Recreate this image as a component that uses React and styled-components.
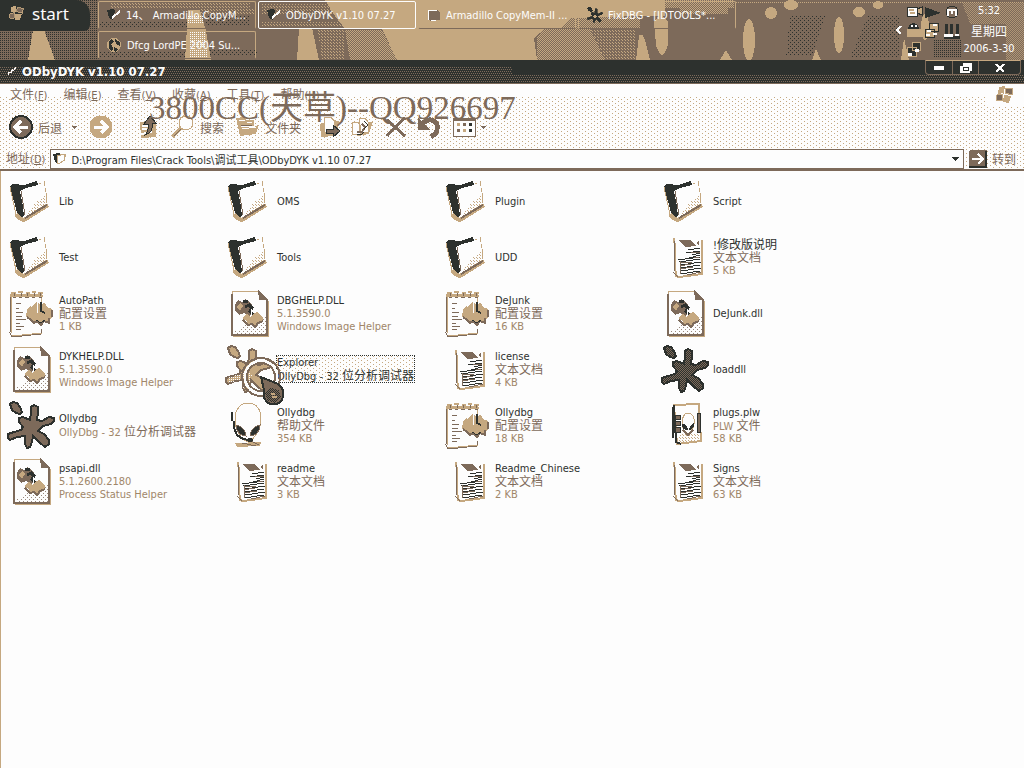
import React from 'react';
import styled, { createGlobalStyle, css } from 'styled-components';

const C = { dark: '#2d312e', brown: '#7d6a5a', mid: '#a08669', tan: '#c5a880', white: '#fdfdfd' };
const UI = "'DejaVu Sans Condensed', 'Noto Sans', 'Noto Sans CJK SC', sans-serif";

const dots = (color, w, h) => css`
  background-image: conic-gradient(at 1px 1px, transparent 75%, ${color} 0),
    conic-gradient(at 1px 1px, transparent 75%, ${color} 0);
  background-size: ${w}px ${h}px;
  background-position: 0 0, ${Math.floor(w / 2)}px ${Math.floor(h / 2)}px;
`;

const Global = createGlobalStyle`
  * { box-sizing: border-box; }
  body { margin: 0; background: ${C.white}; font-family: ${UI}; font-size: 11px; line-height: 13px; color: ${C.dark}; }
  button, input { font: inherit; color: inherit; }
  button { border: 0; padding: 0; background: none; cursor: pointer; }
  svg { display: block; flex: none; }
`;

const Page = styled.div`
  min-height: 100vh;
  display: flex;
  flex-direction: column;
`;

/* Task bar */
const Taskbar = styled.header`
  position: relative;
  height: 60px;
  display: flex;
  background: ${C.brown};
  overflow: hidden;
  color: ${C.white};
`;
const Wallpaper = styled.svg`
  position: absolute;
  inset: 0;
  width: 100%;
  height: 100%;
`;
const StartButton = styled.button`
  position: relative;
  width: 90px;
  height: 31px;
  margin-right: 8px;
  padding: 0 0 4px 8px;
  display: flex;
  align-items: center;
  gap: 7px;
  background: ${C.dark};
  border-radius: 0 14px 6px 0;
  font-family: 'Noto Sans', sans-serif;
  font-size: 17px;
  line-height: 24px;
`;
const Tasks = styled.nav`
  position: relative;
  flex: 1;
  display: grid;
  grid-template-columns: repeat(4, 158px);
  grid-auto-rows: 28px;
  gap: 2px;
  padding-top: 1px;
`;
const TaskButton = styled.button`
  display: flex;
  align-items: center;
  gap: 5px;
  min-width: 0;
  padding: 0 8px;
  border: 1px solid ${(p) => (p.$active ? C.white : C.tan)};
  border-bottom-color: ${(p) => (p.$active ? C.white : C.brown)};
  border-radius: 2px;
  color: ${C.white};
  text-align: left;
  white-space: pre;
`;
const Tray = styled.div`
  position: relative;
  display: flex;
  align-items: center;
`;
const TrayMore = styled.button`
  width: 14px;
  height: 20px;
  display: grid;
  place-items: center;
`;
const Clock = styled.time`
  width: 64px;
  height: 60px;
  padding: 2px 6px 2px 0;
  display: flex;
  flex-direction: column;
  justify-content: space-between;
  text-align: center;
  line-height: 18px;
`;

/* Window frame */
const TitleBar = styled.div`
  height: 24px;
  display: flex;
  align-items: center;
  gap: 4px;
  padding: 0 3px 0 5px;
  background: ${C.dark};
  border-bottom: 1px solid ${C.brown};
  position: relative;
`;
const TitleHaze = styled.div`
  position: absolute;
  left: 0;
  right: ${(p) => p.$right};
  bottom: 0;
  height: ${(p) => p.$height}px;
  ${dots(C.brown, 2, 4)}
`;
const Title = styled.h1`
  position: relative;
  flex: 1;
  margin: 0;
  color: ${C.white};
  font-family: 'DejaVu Sans Condensed', sans-serif;
  font-size: 13px;
  line-height: 16px;
`;
const Controls = styled.div`
  position: relative;
  align-self: flex-start;
  height: 15px;
  display: flex;
  border: 1px solid ${C.brown};
  border-top-color: ${C.tan};
  border-radius: 0 0 4px 4px;
`;
const ControlButton = styled.button`
  width: ${(p) => p.$width}px;
  display: grid;
  place-items: center;
  border-right: 1px solid ${C.brown};
  &:last-child { border-right: 0; }
`;

/* Menu, tool bar, address bar */
const Bars = styled.div`
  position: relative;
  border-bottom: 2px solid ${C.brown};
`;
const BarsTexture = styled.div`
  position: absolute;
  inset: 13px 0 0;
  ${dots(C.tan, 6, 4)}
`;
const MenuBar = styled.nav`
  position: relative;
  height: 22px;
  display: flex;
  gap: 16px;
  padding-left: 10px;
  align-items: center;
  color: ${C.brown};
`;
const MenuItem = styled.button`
  color: ${C.brown};
  white-space: nowrap;
`;
const Brand = styled.div`
  width: 38px;
  height: 22px;
  margin-left: auto;
  display: grid;
  place-items: center;
  background: ${C.white};
`;
const ToolBar = styled.div`
  position: relative;
  height: 42px;
  display: flex;
  align-items: center;
  gap: 10px;
  padding-left: 9px;
`;
const Tool = styled.button`
  display: flex;
  align-items: center;
  gap: 5px;
  margin-left: ${(p) => p.$space || 0}px;
  color: ${C.brown};
`;
const AddressBar = styled.form`
  position: relative;
  height: 21px;
  display: flex;
  align-items: center;
  gap: 5px;
  padding: 0 8px 0 6px;
  color: ${C.brown};
`;
const AddressBox = styled.div`
  flex: 1;
  height: 20px;
  display: flex;
  align-items: center;
  gap: 4px;
  padding: 0 4px 0 2px;
  background: ${C.white};
  border: 1px solid ${C.brown};
`;
const AddressInput = styled.input`
  flex: 1;
  min-width: 0;
  height: 16px;
  padding: 0;
  border: 0;
  outline: 0;
  background: none;
  color: ${C.dark};
`;
const GoButton = styled.button`
  display: flex;
  align-items: center;
  gap: 5px;
  color: ${C.brown};
`;
const Watermark = styled.div`
  position: absolute;
  left: 149px;
  top: 4px;
  font-family: 'Liberation Serif', 'Noto Sans CJK SC', serif;
  font-size: 33px;
  line-height: 40px;
  white-space: nowrap;
  color: ${C.brown};
  pointer-events: none;
`;

/* Folder contents */
const Content = styled.main`
  flex: 1;
  border-left: 1px solid ${C.tan};
  padding: 2px 0 0 6px;
`;
const Files = styled.ul`
  list-style: none;
  margin: 0;
  padding: 0;
  display: grid;
  grid-template-columns: repeat(auto-fill, 218px);
  grid-auto-rows: 56px;
`;
const Tile = styled.li`
  position: relative;
  display: flex;
`;
const TileButton = styled.button`
  display: flex;
  align-items: center;
  gap: 4px;
  text-align: left;
  white-space: nowrap;
`;
const Label = styled.span`
  display: flex;
  flex-direction: column;
  ${(p) => p.$selected && css`
    outline: 1px dotted ${C.dark};
    ${dots(C.tan, 6, 4)}
  `}
`;
const Name = styled.span`
  height: 13px;
  color: ${C.dark};
`;
const Meta = styled.span`
  height: 13px;
  color: ${(p) => (p.$selected ? C.dark : C.mid)};
`;
const Han = styled.span`
  font-family: 'Noto Sans CJK SC', sans-serif;
  font-size: 12px;
  line-height: 11px;
  color: ${(p) => (p.$inherit ? 'inherit' : C.brown)};
`;
const Cursor = styled.svg`
  position: absolute;
  left: 16px;
  top: 15px;
  z-index: 1;
  pointer-events: none;
`;

const Mixed = ({ children, inherit }) =>
  children.split(/([\u4e00-\u9fff]+)/).map((part, i) =>
    i % 2 ? <Han key={i} $inherit={inherit}>{part}</Han> : part
  );

/* Icons */
const Defs = () => (
  <svg width="0" height="0" style={{ position: 'absolute' }} aria-hidden="true">
    <defs>
      {[['ditherTan', C.tan, 3], ['ditherDark', C.dark, 4], ['ditherBrown', C.brown, 4], ['denseDark', C.dark, 2], ['denseBrown', C.brown, 2], ['denseTan', C.tan, 2], ['denseWhite', C.white, 2]].map(([id, fill, s]) => (
        <pattern key={id} id={id} width={s} height={s} patternUnits="userSpaceOnUse">
          <rect width="1" height="1" fill={fill} />
          {s > 2 && <rect x={s - 2} y={s - 2} width="1" height="1" fill={fill} />}
        </pattern>
      ))}
      <pattern id="checkBrown" width="2" height="2" patternUnits="userSpaceOnUse">
        <rect width="2" height="2" fill={C.dark} />
        <path d="M0 0H1V1H0ZM1 1H2V2H1Z" fill={C.brown} />
      </pattern>
      <pattern id="checkTan" width="2" height="2" patternUnits="userSpaceOnUse">
        <path d="M0 0H1V1H0ZM1 1H2V2H1Z" fill={C.tan} />
      </pattern>
    </defs>
  </svg>
);

const Svg = ({ w = 48, h = w, size = w, children }) => (
  <svg width={size} height={(size * h) / w} viewBox={`0 0 ${w} ${h}`} shapeRendering="crispEdges" fill="none" aria-hidden="true">
    {children}
  </svg>
);

const FolderIcon = () => (
  <Svg>
    <path d="M13 13 38 5 40 27 18 41Z" fill={C.white} />
    <path d="M20 36 30 24 40 17V27L19 40Z" fill="url(#ditherTan)" />
    <path d="M32 6H34M37 4V9M38 11V15M39 16V26" stroke={C.tan} />
    <path d="M9 37 12 41 17 43 41 28" stroke={C.tan} strokeWidth="4" />
    <path d="M18 41 40 28" stroke={C.brown} strokeWidth="2" />
    <path d="M3 9 6 7 17 8 30 4 31 8 19 11 13 14 16 30 17 39 14 40 10 36Z" fill={C.dark} />
    <path d="M14 14 18 38" stroke={C.brown} />
    <path d="M3 10 9 37" stroke={C.tan} />
  </Svg>
);
const TextIcon = () => (
  <Svg>
    <path d="M13 5 14 15V32L15 43 18 44 41 41V7" stroke={C.tan} strokeWidth="2" />
    <path d="M35 4 38 6V8" stroke={C.white} strokeWidth="3" />
    <path d="M13 8V17L14 38M12 39 17 44" stroke={C.brown} />
    <path d="M17 7H29L35 13 24 14Z" fill={C.brown} />
    <path d="M35 10 38 8V13" fill={C.brown} />
    <path d="M27 17 39 15M25 20 39 18M31 22 39 20M28 25 39 22M17 27 39 24M18 29 39 26M20 32 40 29M19 35 39 32M20 38 40 35M19 41 39 38" stroke={C.dark} />
    <path d="M30 19H39M33 24H38M19 30 31 29M19 33 30 31M19 36 32 34M26 42 40 39M19 28V41" stroke={C.brown} />
  </Svg>
);
const IniIcon = () => (
  <Svg>
    <path d="M4 6 3 44 5 48 34 45 35 40" stroke={C.brown} strokeWidth="1" />
    <path d="M4 7V44M3 6 34 5 35 15M5 47 35 44" stroke={C.tan} />
    <path d="M3 7H36M4 4H9M11 3H16M19 4H23M25 3H29M31 4H36" stroke={C.tan} strokeWidth="2" />
    <path d="M6 8H9M12 8H15M18 8H22M25 8H28M32 8H35M7 4V7M14 4V7M20 4V7M27 4V7M33 4V7" stroke={C.brown} />
    <path d="M9 14H14M9 19H12M9 23H16M9 27H15M9 30H19M9 34H13M9 37H17M9 40H14" stroke={C.brown} />
    <path d="M20 21 23 17 25 18 29 13 33 15 38 14 40 18 45 20 45 29 42 30 41 34 37 32 34 36 30 32 27 34 24 30 19 28Z" fill={C.tan} />
    <path d="M20 28 24 31 27 34 30 32 34 36 37 32 42 34V29M45 21V28" stroke={C.brown} strokeWidth="2" />
    <path d="M29 31 34 34 38 31" stroke={C.dark} strokeWidth="1" />
    <path d="M34 13V22L38 24" stroke={C.dark} strokeWidth="2" />
    <path d="M30 13V24" stroke={C.white} />
  </Svg>
);
const DllIcon = () => (
  <Svg>
    <path d="M7 2H33L42 11V46H7Z" fill={C.white} stroke={C.tan} />
    <path d="M10 42 24 34 41 26V45H9Z" fill="url(#ditherBrown)" opacity=".8" />
    <path d="M7 5V46H42V10" stroke={C.brown} strokeWidth="2" />
    <path d="M8 47H43V12" stroke={C.tan} />
    <path d="M33 1 43 11H34Z" fill={C.brown} />
    <path d="M10 16 13 11 17 13 20 10 24 12 27 16 26 20 28 25 23 28 19 24 14 26 10 22Z" fill={C.brown} />
    <path d="M11 18 15 14 18 17 15 22Z" fill={C.tan} />
    <path d="M20 18 24 16 27 19 25 22 29 27M18 12H23" stroke={C.dark} strokeWidth="3" />
    <path d="M18 28 22 24 25 28 29 24 33 23 35 26 38 29 37 33 33 34 30 38 27 35 23 36 22 32 18 30Z" fill={C.tan} />
    <path d="M18 31 23 36 27 35 30 38 33 34 38 32" stroke={C.brown} strokeWidth="2" />
    <path d="M26 20V27" stroke={C.white} />
  </Svg>
);

/* Ink splat: a loose drop and seven arms around a body */
const DROP = 'M3 3 6 1 10 2 13 6 15 11 13 13 9 12 5 9Z';
const BODY = 'M12 17 16 16 23 19 24 12 24 6 27 4 31 6 31 12 30 19 35 20 42 16 47 17 47 20 44 23 36 25 31 30 37 33 42 39 42 43 38 46 33 42 26 35 25 41 23 46 20 47 18 43 18 35 10 36 3 39 1 37 1 33 7 31 14 29 16 26 12 21Z';
const Splat = ({ fill, edge, light }) => (
  <Svg>
    <g fill={fill} stroke={edge} strokeWidth="2">
      <path d={DROP} />
      <path d={BODY} />
    </g>
    {light && <path d="M3 32 22 27 27 29 22 46 18 44 20 33 4 38Z" fill="url(#denseWhite)" />}
  </Svg>
);
const AlienIcon = () => (
  <Svg>
    <path d="M10 42 36 41 35 45 12 46Z" fill={C.tan} />
    <path d="M17 42 31 45M26 40 34 44" stroke={C.brown} />
    <path d="M23 2C32 2 36 9 36 18 36 28 30 38 23 41 15 38 10 28 10 18 10 9 15 2 23 2Z" fill={C.white} stroke={C.tan} strokeWidth="1" />
    <path d="M11 24C17 25 21 30 21 35 15 35 11 30 11 24ZM35 24C29 25 25 30 25 35 31 35 35 30 35 24Z" fill={C.dark} stroke={C.brown} />
    <path d="M7 11V20M9 20 9 27 12 34 18 38 24 39" stroke={C.dark} strokeWidth="2" />
    <ellipse cx="25" cy="39" rx="3" ry="2" fill={C.dark} />
  </Svg>
);
const PlwIcon = () => (
  <Svg>
    <path d="M13 4 38 3 40 40 16 43Z" fill={C.white} stroke={C.tan} strokeWidth="2" />
    <path d="M17 34 38 31 39 39 18 42Z" fill="url(#ditherTan)" />
    <path d="M13 4 15 41 20 43M12 6V37" stroke={C.dark} strokeWidth="2" />
    <path d="M14 14H19V18H14ZM14 20H19V24H14ZM14 26H19V31H14ZM36 12H39V31H36Z" fill={C.brown} stroke={C.dark} />
    <path d="M27 12C32 12 34 18 33 23 32 28 30 31 27 33 24 31 21 28 21 22 21 17 23 12 27 12Z" fill={C.white} stroke={C.tan} />
    <path d="M21 23C25 23 27 26 27 29 23 29 21 27 21 23ZM33 22C30 23 28 26 28 29 31 29 33 27 33 22Z" fill={C.dark} />
    <path d="M22 29 27 34 32 29" stroke={C.brown} strokeWidth="2" />
  </Svg>
);
const ICONS = {
  folder: <FolderIcon />,
  text: <TextIcon />,
  ini: <IniIcon />,
  dll: <DllIcon />,
  splat: <Splat fill={C.brown} edge={C.dark} />,
  lightSplat: <Splat fill={C.tan} edge={C.brown} light />,
  darkSplat: <Splat fill="url(#checkBrown)" edge={C.dark} />,
  alien: <AlienIcon />,
  plw: <PlwIcon />,
};

const WinFlag = ({ size }) => (
  <Svg w={20} size={size}>
    <path d="M4 2 10 1 9 8 3 9Z" fill={C.tan} />
    <path d="M11 3 18 4 17 10 10 8Z" fill={C.brown} stroke={C.tan} />
    <path d="M2 10 8 9 7 16 1 15Z" fill={C.brown} stroke={C.tan} />
    <path d="M9 10 16 11 14 18 8 17Z" fill={C.tan} />
  </Svg>
);
const SmallFolder = ({ light }) => (
  <Svg w={14}>
    <path d="M0 2 6 1 8 3 6 12 2 10Z" fill={C.dark} />
    <path d="M5 10 13 3" stroke={light ? C.white : C.tan} strokeWidth="2" />
    {!light && <path d="M4 4 11 2 12 8 5 12Z" fill={C.white} stroke={C.tan} />}
  </Svg>
);
const NoteIcon = () => (
  <Svg w={14}>
    <path d="M1 2H11L13 5V12L3 13 1 10Z" fill={C.brown} />
    <path d="M1 2H10M1 3V12M4 12H9" stroke={C.white} />
  </Svg>
);
const DiscIcon = () => (
  <Svg w={15}>
    <circle cx="7" cy="7" r="7" fill={C.tan} />
    <path d="M5 1C0 3 1 11 5 14L6 10 4 6 7 4ZM8 1 13 4V8L9 6ZM7 9 11 11 9 14 7 13Z" fill={C.dark} />
  </Svg>
);
const RoundArrow = ({ back }) => (
  <Svg w={24}>
    <circle cx="12" cy="12" r="11" fill={back ? C.brown : C.tan} />
    <circle cx="12" cy="12" r="11" stroke={back ? C.dark : C.tan} strokeWidth={back ? 2 : 1} />
    <path d={back ? 'M19 12H6M12 6 6 12 12 18' : 'M5 12H18M12 6 18 12 12 18'} stroke={C.white} strokeWidth="3" />
  </Svg>
);
const Caret = () => (
  <Svg w={5} h={3}><path d="M0 0H5L3 3H2Z" fill={C.brown} /></Svg>
);
const UpIcon = () => (
  <Svg w={18} h={24}>
    <path d="M1 7H7L9 9H17V22L2 23Z" fill={C.tan} />
    <path d="M3 11H9M3 14H8M2 19 13 17" stroke={C.white} strokeWidth="2" />
    <path d="M11 1 5 9H9C10 14 9 17 6 20 13 18 14 13 13 8H17Z" fill={C.brown} stroke={C.dark} />
  </Svg>
);
const SearchIcon = () => (
  <Svg w={24}>
    <path d="M1 22 11 12" stroke={C.tan} strokeWidth="4" />
    <path d="M3 21 11 13" stroke={C.brown} strokeWidth="1" />
    <circle cx="15" cy="8" r="7" fill={C.white} stroke={C.tan} strokeWidth="1" />
  </Svg>
);
const FoldersIcon = () => (
  <Svg w={24} h={22}>
    <path d="M0 2 8 1 10 4H18V10L23 9 20 18 4 20Z" fill={C.tan} />
    <path d="M3 4H9M11 6H16M5 10H19M6 13 20 11" stroke={C.white} />
    <path d="M5 9H16" stroke={C.brown} />
  </Svg>
);
const MoveIcon = () => (
  <Svg w={22} h={24}>
    <path d="M1 9 16 5 21 7 16 21 2 22Z" fill={C.tan} />
    <path d="M5 2H12L15 6V14L5 18Z" fill={C.white} stroke={C.tan} />
    <path d="M7 14H14V10L21 16 14 22V18H7Z" fill={C.brown} stroke={C.dark} />
  </Svg>
);
const CopyIcon = () => (
  <Svg w={24} h={22}>
    <path d="M3 8 22 6 18 18 7 20Z" fill={C.tan} />
    <path d="M8 2H14L17 6V16H8ZM1 6H7L9 9V18H1Z" fill={C.white} stroke={C.tan} />
    <path d="M6 16H11L14 11 11 8" stroke={C.brown} strokeWidth="2" />
    <path d="M6 18H11L13 16M13 5 17 9 13 13" stroke={C.dark} />
  </Svg>
);
const DeleteIcon = () => (
  <Svg w={22}>
    <path d="M2 4 20 20M20 2C13 8 7 14 2 20" stroke={C.brown} strokeWidth="3" />
  </Svg>
);
const UndoIcon = () => (
  <Svg w={23}>
    <path d="M6 7C15-1 25 8 18 18L14 21" stroke={C.brown} strokeWidth="5" />
    <path d="M1 2V14H13Z" fill={C.brown} />
  </Svg>
);
const ViewsIcon = () => (
  <Svg w={24} h={20}>
    <rect x="1" y="1" width="22" height="18" fill={C.white} stroke={C.brown} />
    <path d="M1 2H23" stroke={C.brown} strokeWidth="3" />
    <path d="M5 6H8V9H5ZM11 12H14V15H11Z" fill={C.tan} />
    <path d="M11 6H14V9H11ZM5 12H8V15H5Z" fill={C.brown} />
    <path d="M17 6H20V9H17ZM17 12H20V15H17Z" fill={C.dark} />
  </Svg>
);
const SmallSplat = () => (
  <Svg w={48} size={16}>
    <path d={DROP} fill={C.dark} stroke={C.dark} strokeWidth="4" />
    <path d={BODY} fill={C.dark} stroke={C.dark} strokeWidth="2" />
    <circle cx="24" cy="28" r="5" fill={C.tan} />
  </Svg>
);
const TrayIcons = () => (
  <Svg w={54} h={56}>
    <path d="M1 5H11V14H1Z" fill={C.white} stroke={C.dark} />
    <path d="M3 8H8M4 11H9" stroke={C.tan} strokeWidth="2" />
    <path d="M11 7 16 5V13L11 11Z" fill={C.tan} stroke={C.dark} />
    <path d="M19 5 35 11 28 13 19 16Z" fill={C.dark} />
    <circle cx="46" cy="10" r="6" fill={C.brown} stroke={C.dark} />
    <path d="M42 14V8H50V14M46 8V12" stroke={C.white} strokeWidth="2" />
    <path d="M2 28C2 19 13 19 13 28Z" fill={C.dark} />
    <path d="M5 24H7M9 24H11" stroke={C.white} strokeWidth="2" />
    <path d="M1 27H16V35H1Z" fill={C.tan} />
    <path d="M23 21H32V29H23ZM19 27H28V35H19Z" fill={C.tan} stroke={C.dark} />
    <path d="M21 29H25M27 23H31M20 33H24M27 32H31" stroke={C.white} strokeWidth="2" />
    <path d="M40 22V34M45 22V34M51 22V34M38 35H54" stroke={C.dark} strokeWidth="3" />
    <path d="M38 32H47V35H38ZM49 32H53V34H49Z" fill={C.white} />
    <path d="M6 40H14V48H6ZM1 45H10V54H1Z" fill={C.dark} stroke={C.tan} />
    <path d="M2 52H6M9 48H13" stroke={C.white} strokeWidth="3" />
  </Svg>
);

const WallpaperArt = () => (
  <Wallpaper viewBox="0 0 1024 60" preserveAspectRatio="none" shapeRendering="crispEdges" aria-hidden="true">
    <rect width="1024" height="60" fill={C.brown} />
    <path d="M0 0H98V60H0Z" fill="url(#denseDark)" />
    <path d="M98 22H190V28H98ZM98 52H185V60H98ZM205 16H250V26H205ZM210 50H258V56H210Z" fill="url(#ditherDark)" />
    <path d="M110 2H250V8H110ZM200 8H254V14H200ZM262 4H350V14H262ZM262 22H350V27H262ZM318 30H345V60H322Z" fill="url(#ditherTan)" />
    <path d="M33 30H44L55 60H28Z" fill={C.tan} />
    <path d="M188 10H200L206 31 211 60H185Z" fill={C.tan} />
    <path d="M188 16H203V24H188ZM190 31H206V48H190ZM190 50H208V60H190Z" fill="url(#denseWhite)" />
    <path d="M299 28H312L319 60H297Z" fill={C.tan} />
    <path d="M325 0H665V16H640L570 18 560 29H345L335 16Z" fill={C.tan} />
    <path d="M345 30H382L397 60H350Z" fill="url(#checkTan)" />
    <path d="M382 29H545L534 38 537 60H397Z" fill={C.tan} />
    <path d="M560 17H640V29H555ZM545 29H590L605 60H537V38Z" fill="url(#checkTan)" />
    <path d="M590 29H636V60H605Z" fill="url(#ditherTan)" />
    <path d="M665 0H734V8H665ZM680 8H728V14H680Z" fill="url(#checkTan)" />
    <path d="M636 60 639 36Q643 30 647 48L650 60ZM654 22Q661 10 668 22V45Q662 65 656 45Z" fill={C.tan} />
    <path d="M736 1H1024V3H736Z" fill="url(#denseTan)" />
    <g fill={C.tan}>
      <ellipse cx="749" cy="40" rx="6" ry="21" />
      <ellipse cx="839" cy="35" rx="5" ry="18" />
      <ellipse cx="771" cy="13" rx="6" ry="6" />
      <ellipse cx="791" cy="5" rx="7" ry="5" />
      <ellipse cx="859" cy="12" rx="6" ry="5" />
      <ellipse cx="878" cy="5" rx="5" ry="4" />
      <ellipse cx="925" cy="27" rx="4" ry="13" />
      <path d="M812 60 816 49 821 60ZM901 60 904 38 909 60ZM720 60 726 50 732 60Z" />
    </g>
    <path d="M790 16H826L812 56H786ZM868 16H900V58H850Z" fill="url(#ditherDark)" />
    <path d="M934 40H962V58H934Z" fill="url(#denseDark)" />
    <path d="M962 2H1024V60H1006V24H970Z" fill="url(#checkTan)" opacity=".7" />
  </Wallpaper>
);

const files = [
  ['folder', 'Lib'], ['folder', 'OMS'], ['folder', 'Plugin'], ['folder', 'Script'],
  ['folder', 'Test'], ['folder', 'Tools'], ['folder', 'UDD'], ['text', '!修改版说明', '文本文档', '5 KB'],
  ['ini', 'AutoPath', '配置设置', '1 KB'], ['dll', 'DBGHELP.DLL', '5.1.3590.0', 'Windows Image Helper'],
  ['ini', 'DeJunk', '配置设置', '16 KB'], ['dll', 'DeJunk.dll'],
  ['dll', 'DYKHELP.DLL', '5.1.3590.0', 'Windows Image Helper'], ['lightSplat', 'Explorer', 'OllyDbg - 32 位分析调试器'],
  ['text', 'license', '文本文档', '4 KB'], ['darkSplat', 'loaddll'],
  ['splat', 'Ollydbg', 'OllyDbg - 32 位分析调试器'], ['alien', 'Ollydbg', '帮助文件', '354 KB'],
  ['ini', 'Ollydbg', '配置设置', '18 KB'], ['plw', 'plugs.plw', 'PLW 文件', '58 KB'],
  ['dll', 'psapi.dll', '5.1.2600.2180', 'Process Status Helper'], ['text', 'readme', '文本文档', '3 KB'],
  ['text', 'Readme_Chinese', '文本文档', '2 KB'], ['text', 'Signs', '文本文档', '63 KB'],
];

const File = ({ icon, name, meta }) => {
  const selected = name === 'Explorer';
  return (
    <Tile>
      <TileButton type="button">
        {ICONS[icon]}
        <Label $selected={selected}>
          <Name><Mixed inherit>{name}</Mixed></Name>
          {meta.map((m) => <Meta key={m} $selected={selected}><Mixed inherit={selected}>{m}</Mixed></Meta>)}
        </Label>
      </TileButton>
      {selected && (
        <Cursor width="48" height="50" viewBox="0 0 48 50" fill="none" shapeRendering="crispEdges" aria-hidden="true">
          <circle cx="20" cy="21" r="16" stroke={C.white} strokeWidth="3" />
          <circle cx="20" cy="21" r="19" stroke={C.brown} strokeWidth="2" />
          <circle cx="20" cy="21" r="14" stroke={C.brown} strokeWidth="2" />
          <path d="M20 21 37 28Q45 34 41 44 35 51 27 47 21 42 23 34Z" fill={C.brown} stroke={C.dark} strokeWidth="2" />
          <path d="M24 36 30 32 38 34 40 42 34 47 27 45Z" fill="url(#checkBrown)" />
          <path d="M30 38H34M31 41H36" stroke={C.tan} strokeWidth="2" />
        </Cursor>
      )}
    </Tile>
  );
};

const Menu = ({ label, letter }) => (
  <MenuItem type="button"><Han>{label}</Han>(<u>{letter}</u>)</MenuItem>
);

export default function App() {
  return (
    <Page>
      <Global />
      <Defs />
      <Taskbar>
        <WallpaperArt />
        <StartButton type="button"><WinFlag size={17} />start</StartButton>
        <Tasks aria-label="Tasks">
          <TaskButton type="button"><SmallFolder light />{'14、 Armadillo CopyM...'}</TaskButton>
          <TaskButton type="button" $active><SmallFolder light />ODbyDYK v1.10 07.27</TaskButton>
          <TaskButton type="button"><NoteIcon />Armadillo CopyMem-II ...</TaskButton>
          <TaskButton type="button"><SmallSplat />FixDBG - [IDTOOLS*...</TaskButton>
          <TaskButton type="button"><DiscIcon />Dfcg LordPE 2004 Su...</TaskButton>
        </Tasks>
        <Tray>
          <TrayMore type="button" aria-label="Show hidden icons">
            <Svg w={6} h={8}><path d="M5 0 1 4 5 8" stroke={C.white} strokeWidth="2" /></Svg>
          </TrayMore>
          <TrayIcons />
          <Clock dateTime="2006-03-30T05:32">
            <span>5:32</span>
            <Han $inherit>星期四</Han>
            <span>2006-3-30</span>
          </Clock>
        </Tray>
      </Taskbar>

      <TitleBar>
        <TitleHaze $right="50%" $height={16} />
        <TitleHaze $right="0" $height={8} />
        <Svg w={13}><path d="M1 5 5 10 11 3" stroke={C.dark} strokeWidth="3" /><path d="M3 9 11 3" stroke={C.white} strokeWidth="2" /></Svg>
        <Title>ODbyDYK v1.10 07.27</Title>
        <Controls>
          <ControlButton type="button" $width={27} aria-label="Minimize"><Svg w={10} h={4}><path d="M0 0H10V4H0Z" fill={C.white} /></Svg></ControlButton>
          <ControlButton type="button" $width={26} aria-label="Restore"><Svg w={12} h={10}><path d="M3 0H12V8H10V10H0V3H3Z" fill={C.white} /><path d="M3 4H8V7H3Z" stroke={C.dark} /></Svg></ControlButton>
          <ControlButton type="button" $width={41} aria-label="Close"><Svg w={10} h={8}><path d="M1 0 9 8M9 0 1 8" stroke={C.white} strokeWidth="2" /></Svg></ControlButton>
        </Controls>
      </TitleBar>

      <Bars>
        <BarsTexture />
        <MenuBar aria-label="Menu">
          <Menu label="文件" letter="F" />
          <Menu label="编辑" letter="E" />
          <Menu label="查看" letter="V" />
          <Menu label="收藏" letter="A" />
          <Menu label="工具" letter="T" />
          <Menu label="帮助" letter="H" />
          <Brand><WinFlag size={20} /></Brand>
        </MenuBar>
        <ToolBar>
          <Tool type="button"><RoundArrow back /><Han>后退</Han></Tool>
          <Tool type="button" aria-label="Back history"><Caret /></Tool>
          <Tool type="button" aria-label="Forward" $space={2}><RoundArrow /></Tool>
          <Tool type="button" aria-label="Up" $space={16}><UpIcon /></Tool>
          <Tool type="button" $space={4}><SearchIcon /><Han>搜索</Han></Tool>
          <Tool type="button" $space={2}><FoldersIcon /><Han>文件夹</Han></Tool>
          <Tool type="button" aria-label="Move to" $space={8}><MoveIcon /></Tool>
          <Tool type="button" aria-label="Copy to"><CopyIcon /></Tool>
          <Tool type="button" aria-label="Delete"><DeleteIcon /></Tool>
          <Tool type="button" aria-label="Undo"><UndoIcon /></Tool>
          <Tool type="button" aria-label="Views" $space={2}><ViewsIcon /><Caret /></Tool>
        </ToolBar>
        <AddressBar onSubmit={(e) => e.preventDefault()}>
          <label htmlFor="address"><Han>地址</Han>(<u>D</u>)</label>
          <AddressBox>
            <SmallFolder />
            <AddressInput id="address" defaultValue={'D:\\Program Files\\Crack Tools\\调试工具\\ODbyDYK v1.10 07.27'} />
            <button type="button" aria-label="Address history"><Svg w={7} h={4}><path d="M0 0H7L4 4H3Z" fill={C.dark} /></Svg></button>
          </AddressBox>
          <GoButton type="submit">
            <Svg w={18}><rect width="18" height="18" rx="2" fill={C.brown} /><path d="M0 17H17V1" stroke={C.dark} strokeWidth="2" /><path d="M3 9H14M9 4 14 9 9 14" stroke={C.white} strokeWidth="2" /></Svg>
            <Han>转到</Han>
          </GoButton>
        </AddressBar>
        <Watermark>3800CC(天草)--QQ926697</Watermark>
      </Bars>

      <Content>
        <Files>
          {files.map(([icon, name, ...meta], i) => <File key={i} icon={icon} name={name} meta={meta} />)}
        </Files>
      </Content>
    </Page>
  );
}
